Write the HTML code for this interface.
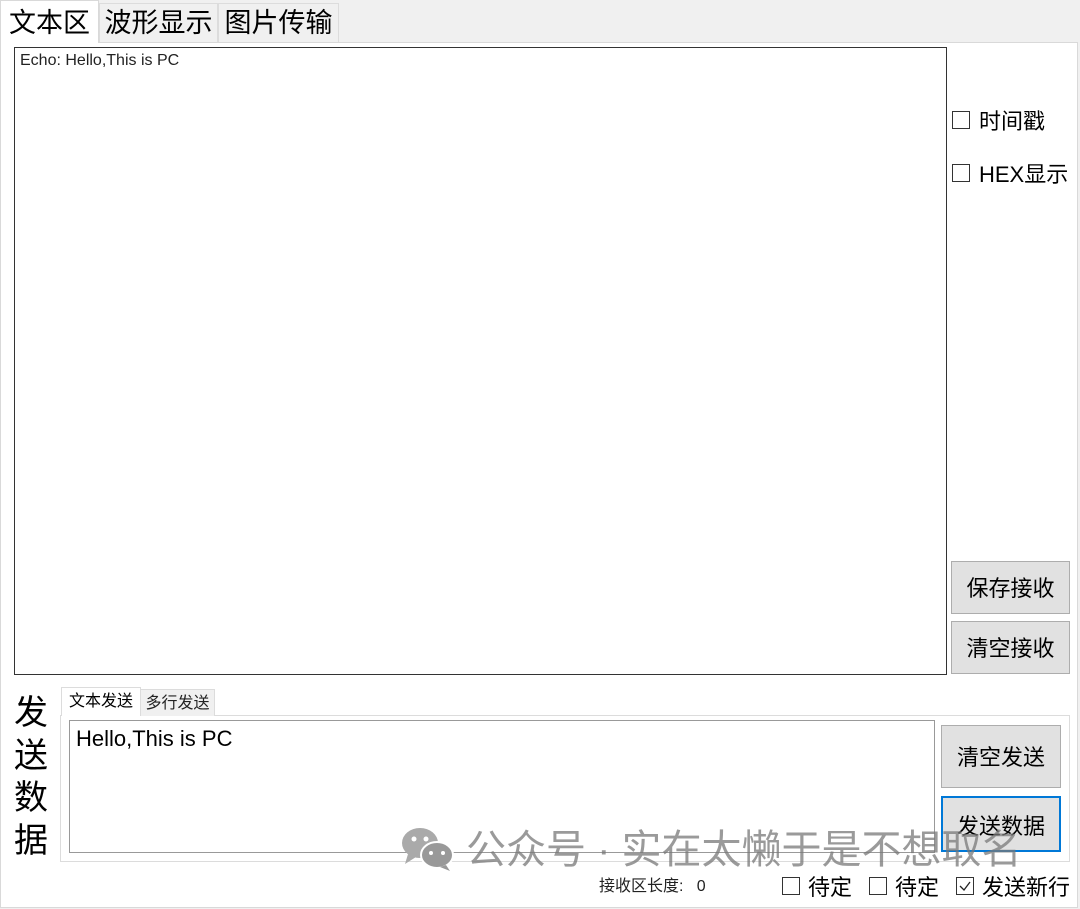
<!DOCTYPE html>
<html><head><meta charset="utf-8"><style>
*{margin:0;padding:0;box-sizing:border-box}
body{width:1080px;height:909px;background:#f0f0f0;position:relative;overflow:hidden;font-family:"Liberation Sans","Noto Sans CJK SC",sans-serif;color:#000}
.a{position:absolute}
.tab{position:absolute;font-size:27px;line-height:38px;text-align:center;background:#f0f0f0;border:1px solid #dcdcdc;border-bottom:none}
.cb{position:absolute;width:18px;height:18px;border:1px solid #333;background:#fff}
.lbl{position:absolute;font-size:22px;line-height:24px;white-space:nowrap}
.btn{position:absolute;background:#e1e1e1;border:1px solid #adadad;font-size:22px;text-align:center}
</style></head><body>
<div class="a" style="left:0;top:42px;width:1078px;height:866px;background:#fff;border:1px solid #d9d9d9"></div>
<div class="tab" style="left:0;top:0;width:99px;height:43px;background:#fff;line-height:44px;border-color:#d9d9d9">文本区</div>
<div class="tab" style="left:99px;top:3px;width:119px;height:39px">波形显示</div>
<div class="tab" style="left:218px;top:3px;width:121px;height:39px">图片传输</div>
<div class="a" style="left:14px;top:47px;width:933px;height:628px;border:1px solid #333;background:#fff"></div>
<div class="lbl" style="left:20px;top:52px;font-size:16px;line-height:18px;color:#222">Echo: Hello,This is PC</div>
<div class="cb" style="left:952px;top:111px"></div><div class="lbl" style="left:979px;top:110px">时间戳</div>
<div class="cb" style="left:952px;top:164px"></div><div class="lbl" style="left:979px;top:163px">HEX显示</div>
<div class="btn" style="left:951px;top:561px;width:119px;height:53px;line-height:53px">保存接收</div>
<div class="btn" style="left:951px;top:621px;width:119px;height:53px;line-height:53px">清空接收</div>
<div class="a" style="left:13px;top:692px;width:36px;font-size:34px;line-height:42.5px;text-align:center">发<br>送<br>数<br>据</div>
<div class="a" style="left:60px;top:715px;width:1010px;height:147px;border:1px solid #dcdcdc;background:#fff"></div>
<div class="a" style="left:61px;top:687px;width:80px;height:29px;background:#fff;border:1px solid #dcdcdc;border-bottom:none;font-size:16px;line-height:28px;text-align:center">文本发送</div>
<div class="a" style="left:140px;top:689px;width:75px;height:27px;background:#f0f0f0;border:1px solid #dcdcdc;border-bottom:none;font-size:16px;line-height:28px;text-align:center;color:#222">多行发送</div>
<div class="a" style="left:69px;top:720px;width:866px;height:133px;border:1px solid #999;background:#fff"></div>
<div class="lbl" style="left:76px;top:726px;font-size:22px;line-height:26px">Hello,This is PC</div>
<div class="btn" style="left:941px;top:725px;width:120px;height:63px;line-height:63px">清空发送</div>
<div class="btn" style="left:941px;top:796px;width:120px;height:56px;line-height:58px;border:2px solid #0078d7">发送数据</div>
<svg class="a" style="left:400px;top:826px" width="58" height="46" viewBox="0 0 58 46"><ellipse cx="20" cy="17" rx="18" ry="15" fill="#aaa"/><path d="M8 28 L5 38 L16 31Z" fill="#aaa"/><ellipse cx="37" cy="29" rx="16" ry="13" fill="#999" stroke="#fff" stroke-width="2"/><path d="M46 39 L50 45 L40 41Z" fill="#999"/><circle cx="14" cy="13" r="2.5" fill="#fff"/><circle cx="26" cy="13" r="2.5" fill="#fff"/><circle cx="31" cy="27" r="2" fill="#fff"/><circle cx="43" cy="27" r="2" fill="#fff"/></svg>
<div class="lbl" style="left:466px;top:827px;font-size:40px;line-height:46px;color:rgba(120,120,120,0.75)">公众号 · 实在太懒于是不想取名</div>
<div class="lbl" style="left:599px;top:877px;font-size:16px;line-height:20px;color:#222">接收区长度:&nbsp;&nbsp;&nbsp;0</div>
<div class="cb" style="left:782px;top:877px"></div><div class="lbl" style="left:808px;top:876px">待定</div>
<div class="cb" style="left:869px;top:877px"></div><div class="lbl" style="left:895px;top:876px">待定</div>
<div class="cb" style="left:956px;top:877px"><svg width="16" height="16" style="position:absolute;left:0;top:0"><path d="M3 8 L7 12 L13 4" fill="none" stroke="#222" stroke-width="1.3"/></svg></div><div class="lbl" style="left:982px;top:876px">发送新行</div>
</body></html>
